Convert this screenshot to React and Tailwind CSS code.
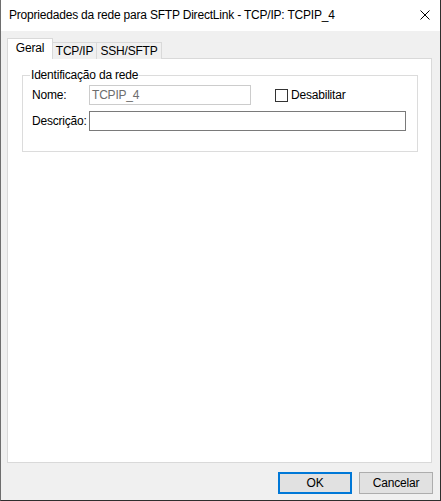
import React from "react";

const font = { fontFamily: '"Liberation Sans", Arial, sans-serif' };

export default function App() {
  return (
    <div
      className="w-[441px] h-[501px] bg-[#f0f0f0] flex flex-col border-l border-r border-b border-l-[#6e6e6e] border-r-[#2e2e2e] border-b-[#2e2e2e] text-[12px] tracking-[-0.2px] text-black"
      style={font}
    >
      {/* Title bar */}
      <div className="h-[31px] bg-white flex items-center justify-between pl-[8px] pr-[10px] shrink-0">
        <span className="leading-[15px] text-[12px]">
          Propriedades da rede para SFTP DirectLink - TCP/IP: TCPIP_4
        </span>
        <svg width="10" height="10" viewBox="0 0 10 10" className="mb-[1px]">
          <path d="M0.5 0.5 L9.5 9.5 M9.5 0.5 L0.5 9.5" stroke="#000" strokeWidth="1" fill="none" />
        </svg>
      </div>

      {/* Body */}
      <div className="flex flex-col pl-[6px] pr-[8px] pt-[7px]">
        {/* Tabs */}
        <div className="flex items-end h-[21px] relative z-10">
          <div className="w-[46px] h-[21px] bg-white border border-b-0 border-[#d9d9d9] flex items-start justify-center pt-[2px] leading-[15px]">
            Geral
          </div>
          <div className="w-[44px] h-[17px] bg-[#f0f0f0] border border-l-0 border-b-0 border-[#d9d9d9] flex items-center justify-center leading-[15px]">
            TCP/IP
          </div>
          <div className="w-[65px] h-[17px] bg-[#f0f0f0] border border-l-0 border-b-0 border-[#d9d9d9] flex items-center justify-center leading-[15px]">
            SSH/SFTP
          </div>
        </div>

        {/* Panel */}
        <div className="-mt-px h-[405px] bg-white border border-[#d9d9d9] pl-[14px] pr-[13px] pt-[9px]">
          <fieldset className="border border-[#dcdcdc] h-[84px] pl-[9px] pt-[3px]">
            <legend className="-ml-[2px] px-[1px] leading-[14px]">Identificação da rede</legend>
            <div className="flex items-center h-[20px]">
              <span className="w-[57px] leading-[15px]">Nome:</span>
              <div className="w-[162px] h-[20px] border border-[#cccccc] bg-white flex items-center pl-[2px] text-[#6d6d6d] leading-[15px]">
                TCPIP_4
              </div>
              <div className="ml-[24px] w-[13px] h-[13px] border border-[#333333] bg-white" />
              <span className="ml-[3px] leading-[15px]">Desabilitar</span>
            </div>
            <div className="flex items-center h-[20px] mt-[6px]">
              <span className="w-[57px] leading-[15px]">Descrição:</span>
              <div className="w-[317px] h-[20px] border border-[#7a7a7a] bg-white" />
            </div>
          </fieldset>
        </div>
      </div>

      {/* Buttons */}
      <div className="flex justify-end gap-[7px] pr-[7px] mt-[9px]">
        <button className="w-[74px] h-[22px] bg-[#e1e1e1] border-2 border-[#0078d7] flex items-center justify-center leading-[15px] tracking-[-0.2px]" style={font}>
          OK
        </button>
        <button className="w-[74px] h-[22px] bg-[#e1e1e1] border border-[#adadad] flex items-center justify-center leading-[15px] tracking-[-0.2px]" style={font}>
          Cancelar
        </button>
      </div>
    </div>
  );
}
